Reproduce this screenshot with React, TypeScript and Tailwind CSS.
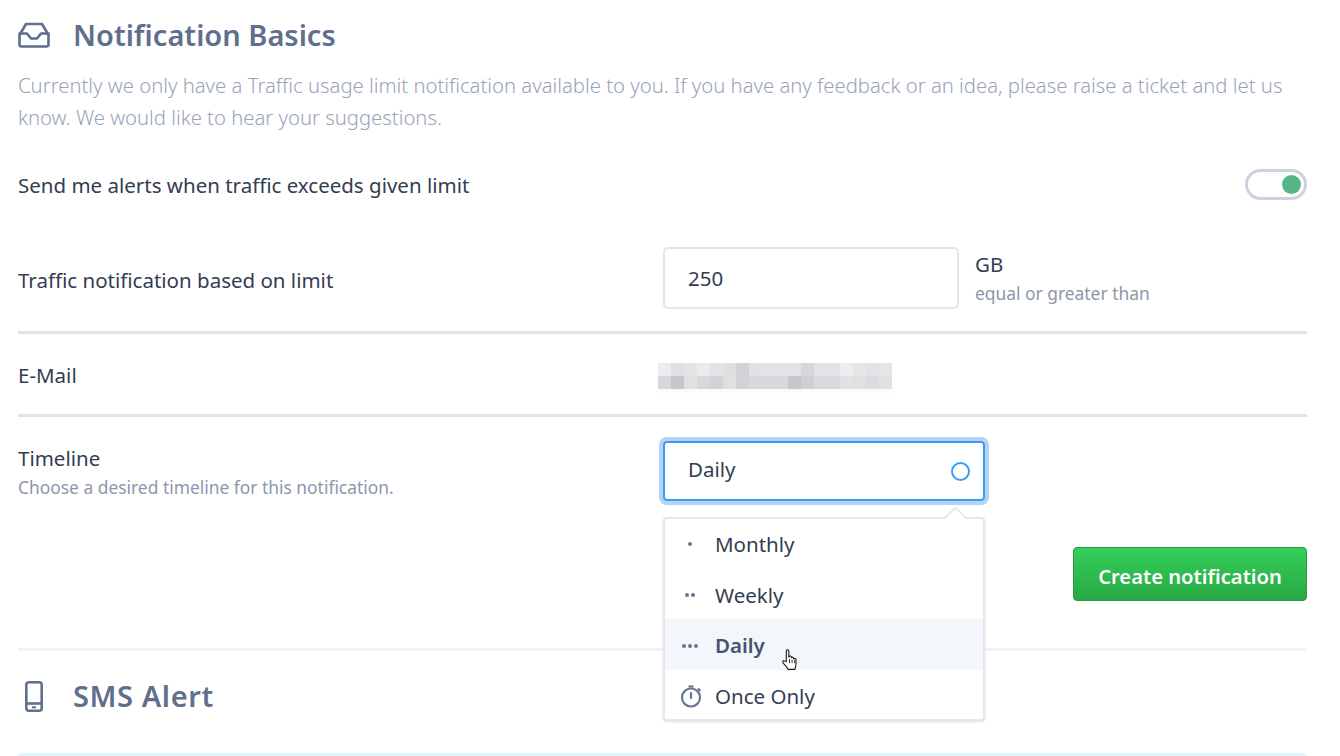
// Notification settings panel
const blurCells = [
  ["#ededef", "#e0e0e3", "#e4e4e7", "#ebebed", "#e3e3e6", "#dfdfe2", "#d2d2d7", "#e2e2e5", "#e3e3e6", "#e3e3e6", "#e3e3e6", "#d6d6db", "#e3e3e6", "#e3e3e6", "#eeeef0", "#e7e7ea", "#e3e3e6", "#e5e5e8"],
  ["#d8d8dc", "#c6c6cc", "#e0e0e3", "#d8d8dc", "#d2d2d7", "#e0e0e3", "#d2d2d7", "#d8d8dc", "#d8d8dc", "#d8d8dc", "#c6c6cc", "#cfcfd4", "#dadade", "#dadade", "#e2e2e5", "#e0e0e3", "#dcdce0", "#e2e2e5"],
]

function InboxIcon() {
  return (
    <svg width="32" height="26" viewBox="0 0 32 26" fill="none" stroke="#5f6f8c" strokeWidth="2.6" strokeLinejoin="round" strokeLinecap="round">
      <path d="M1.5 13 8 2h16l6.500 11v9.500a2 2 0 0 1-2 2h-25a2 2 0 0 1-2-2z" />
      <path d="M1.500 11.500h7.500l4 5h6l4-5h7.500" />
    </svg>
  )
}

function PhoneIcon() {
  return (
    <svg width="18" height="31" viewBox="0 0 18 31" fill="none" stroke="#5f6f8c" strokeWidth="2.600">
      <rect x="1.300" y="1.300" width="15.400" height="28.400" rx="2.500" />
      <path d="M1.300 22.500h15.400" />
      <path d="M7 26.300h4" strokeWidth="2" />
    </svg>
  )
}

function TimerIcon() {
  return (
    <svg width="23" height="23" viewBox="0 0 23 23" fill="none" stroke="#64779a" strokeWidth="2.200" className="ml-[1px] shrink-0">
      <circle cx="11" cy="12.500" r="9" />
      <path d="M8.500 1.500h5" />
      <path d="M11 8v5" strokeLinecap="round" />
      <path d="M18 3.500l2.500 2.500" />
    </svg>
  )
}

function HandCursor() {
  return (
    <svg width="17" height="23" viewBox="0 0 16 22" className="absolute left-[117px] top-[130px]">
      <path
        d="M4 1.800c0-1.500 2.400-1.500 2.400 0v6l.3-.6c.6-.9 2-.6 2.100.5l.1.700c.5-1 2-.7 2.100.4l.1.700c.7-.8 2-.4 2.100.7.300 2.300.300 4.400-.300 6.600l-.7 2.700H5.600c-.6-1.700-1.800-3-3.300-4.500-1-1-1.800-2-1.800-2.800 0-1 1.100-1.300 1.900-.7L4 12z"
        fill="#ffffff"
        stroke="#111111"
        strokeWidth="1"
        strokeLinejoin="round"
      />
      <path d="M7 9.500v4M9.500 10v3.500M12 10.500v3" stroke="#111111" strokeWidth="0.800" />
    </svg>
  )
}

function Dots({ count }: { count: number }) {
  return (
    <span className="flex w-[22px] justify-center gap-[2px]">
      {Array.from({ length: count }).map((_, i) => (
        <span key={i} className="h-[4px] w-[4px] rounded-full bg-[#64779a]" />
      ))}
    </span>
  )
}

export default function App() {
  return (
    <div className="h-[756px] w-[1340px] overflow-hidden bg-white pl-[18px] pr-[33px] font-['Noto_Sans',sans-serif] text-[20.500px] text-[#333d52]">
      {/* Notification basics */}
      <div className="mt-[20px] flex h-[30px] items-center gap-[23px]">
        <InboxIcon />
        <h2 className="text-[29px] font-semibold text-[#5f6f8c]">Notification Basics</h2>
      </div>
      <p className="mt-[19px] text-[20.250px] font-light leading-[32px] text-[#98a4b8]">
        Currently we only have a Traffic usage limit notification available to you. If you have any feedback or an idea, please raise a ticket and let us know. We would like to hear your suggestions.
      </p>

      <div className="mt-[35px] flex h-[32px] items-center justify-between">
        <span className="pt-[2px]">Send me alerts when traffic exceeds given limit</span>
        <span className="flex h-[31px] w-[62px] items-center justify-end rounded-full border-[3px] border-[#cdd2df] pr-[3px]">
          <span className="h-[19px] w-[19px] rounded-full bg-[#56b687]" />
        </span>
      </div>

      <div className="mt-[47px] flex h-[62px] items-center">
        <span className="w-[645px] pt-[4px]">Traffic notification based on limit</span>
        <div className="flex h-[62px] w-[296px] items-center rounded-[5px] border-2 border-[#e2e5ec] pl-[23px]">250</div>
        <div className="ml-[16px] pt-[2px]">
          <div className="leading-[28px]">GB</div>
          <div className="text-[17.400px] leading-[30px] text-[#8b97ad]">equal or greater than</div>
        </div>
      </div>

      <div className="mt-[22px] h-[3px] bg-[#dfe3eb]" />
      <div className="flex h-[80px] items-center">
        <span className="w-[640px] pt-[3px]">E-Mail</span>
        <div className="mt-[7px]">
          {blurCells.map((row, r) => (
            <div key={r} className="flex">
              {row.map((color, c) => (
                <span key={c} className="h-[13px] w-[13px]" style={{ backgroundColor: color }} />
              ))}
            </div>
          ))}
          <div className="h-[4px] w-[234px] bg-[#fbfbfc]" />
        </div>
      </div>
      <div className="h-[3px] bg-[#dfe3eb]" />

      {/* Timeline */}
      <div className="mt-[24px] flex h-[60px]">
        <div className="w-[645px] pt-[2px]">
          <div className="leading-[30px]">Timeline</div>
          <div className="text-[17.400px] leading-[28px] text-[#8b97ad]">Choose a desired timeline for this notification.</div>
        </div>
        <div className="relative h-[60px] w-[322px]">
          <div className="flex h-[60px] items-center justify-between rounded-[4px] border-2 border-[#369ff5] pl-[23px] pr-[13px] shadow-[0_0_0_4px_#b4d3f3]">
            <span className="-mt-[4px]">Daily</span>
            <span className="h-[19px] w-[19px] rounded-full border-2 border-[#369ff5]" />
          </div>
          <div className="absolute left-0 top-[76px] z-10 h-[204px] w-[322px] rounded-[4px] border-2 border-[#e4e7ed] bg-white shadow-sm">
            <span className="absolute -top-[9px] left-[283px] h-[15px] w-[15px] rotate-45 border-l border-t border-[#d5d9e1] bg-white" />
            <div className="relative flex h-[50px] items-center gap-[14px] pl-[14px]">
              <Dots count={1} />
              Monthly
            </div>
            <div className="relative flex h-[50px] items-center gap-[14px] pl-[14px] pt-[2px]">
              <Dots count={2} />
              Weekly
            </div>
            <div className="relative flex h-[51px] items-center gap-[14px] bg-[#f3f6fa] pl-[14px] pt-[2px] font-semibold text-[#46546f]">
              <Dots count={3} />
              Daily
            </div>
            <div className="relative flex h-[49px] items-center gap-[12px] pl-[14px] pt-[3px]">
              <TimerIcon />
              Once Only
            </div>
            <HandCursor />
          </div>
        </div>
      </div>

      <div className="mt-[46px] flex justify-end">
        <button
          type="button"
          className="h-[54px] w-[234px] rounded-[4px] border border-[#2a9a4a] bg-gradient-to-b from-[#34d058] to-[#28a745] pt-[4px] text-[20.200px] font-semibold text-white"
        >
          Create notification
        </button>
      </div>

      <div className="mt-[47px] h-[3px] bg-[#f2f2f4]" />

      {/* SMS alert */}
      <div className="mt-[29px] flex h-[32px] items-center">
        <span className="ml-[7px] w-[48px]">
          <PhoneIcon />
        </span>
        <h2 className="text-[29px] font-semibold tracking-[0.6px] text-[#5f6f8c]">SMS Alert</h2>
      </div>
      <div className="mt-[41px] h-[60px] rounded-[4px] bg-[#e3f7fa]" />
    </div>
  )
}
